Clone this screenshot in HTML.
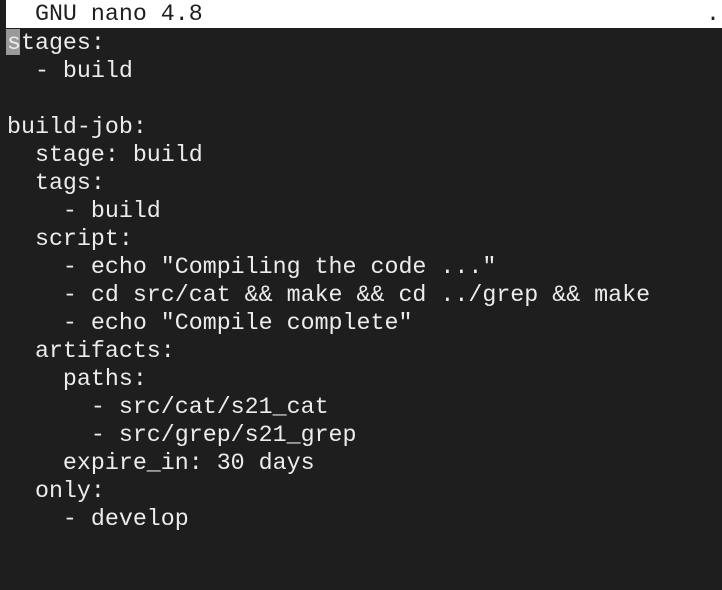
<!DOCTYPE html>
<html><head><style>
html,body{margin:0;padding:0;background:#1e1e1e;width:722px;height:590px;overflow:hidden}
.hdr{position:absolute;left:6px;top:0;width:716px;height:28px;background:#fff}
pre{position:absolute;margin:0;left:7px;font-family:"Liberation Mono",monospace;font-size:23.3px;line-height:28px;color:#ececec;letter-spacing:0}
.h{color:#1e1e1e;top:0}
.cur{position:absolute;left:6px;top:29px;width:14px;height:26px;background:#9a9a9a}
</style></head><body>
<div class="hdr"></div>
<pre class="h">  GNU nano 4.8                                    .</pre>
<div class="cur"></div>
<pre style="top:29px">stages:
  - build

build-job:
  stage: build
  tags:
    - build
  script:
    - echo "Compiling the code ..."
    - cd src/cat &amp;&amp; make &amp;&amp; cd ../grep &amp;&amp; make
    - echo "Compile complete"
  artifacts:
    paths:
      - src/cat/s21_cat
      - src/grep/s21_grep
    expire_in: 30 days
  only:
    - develop</pre>
</body></html>
